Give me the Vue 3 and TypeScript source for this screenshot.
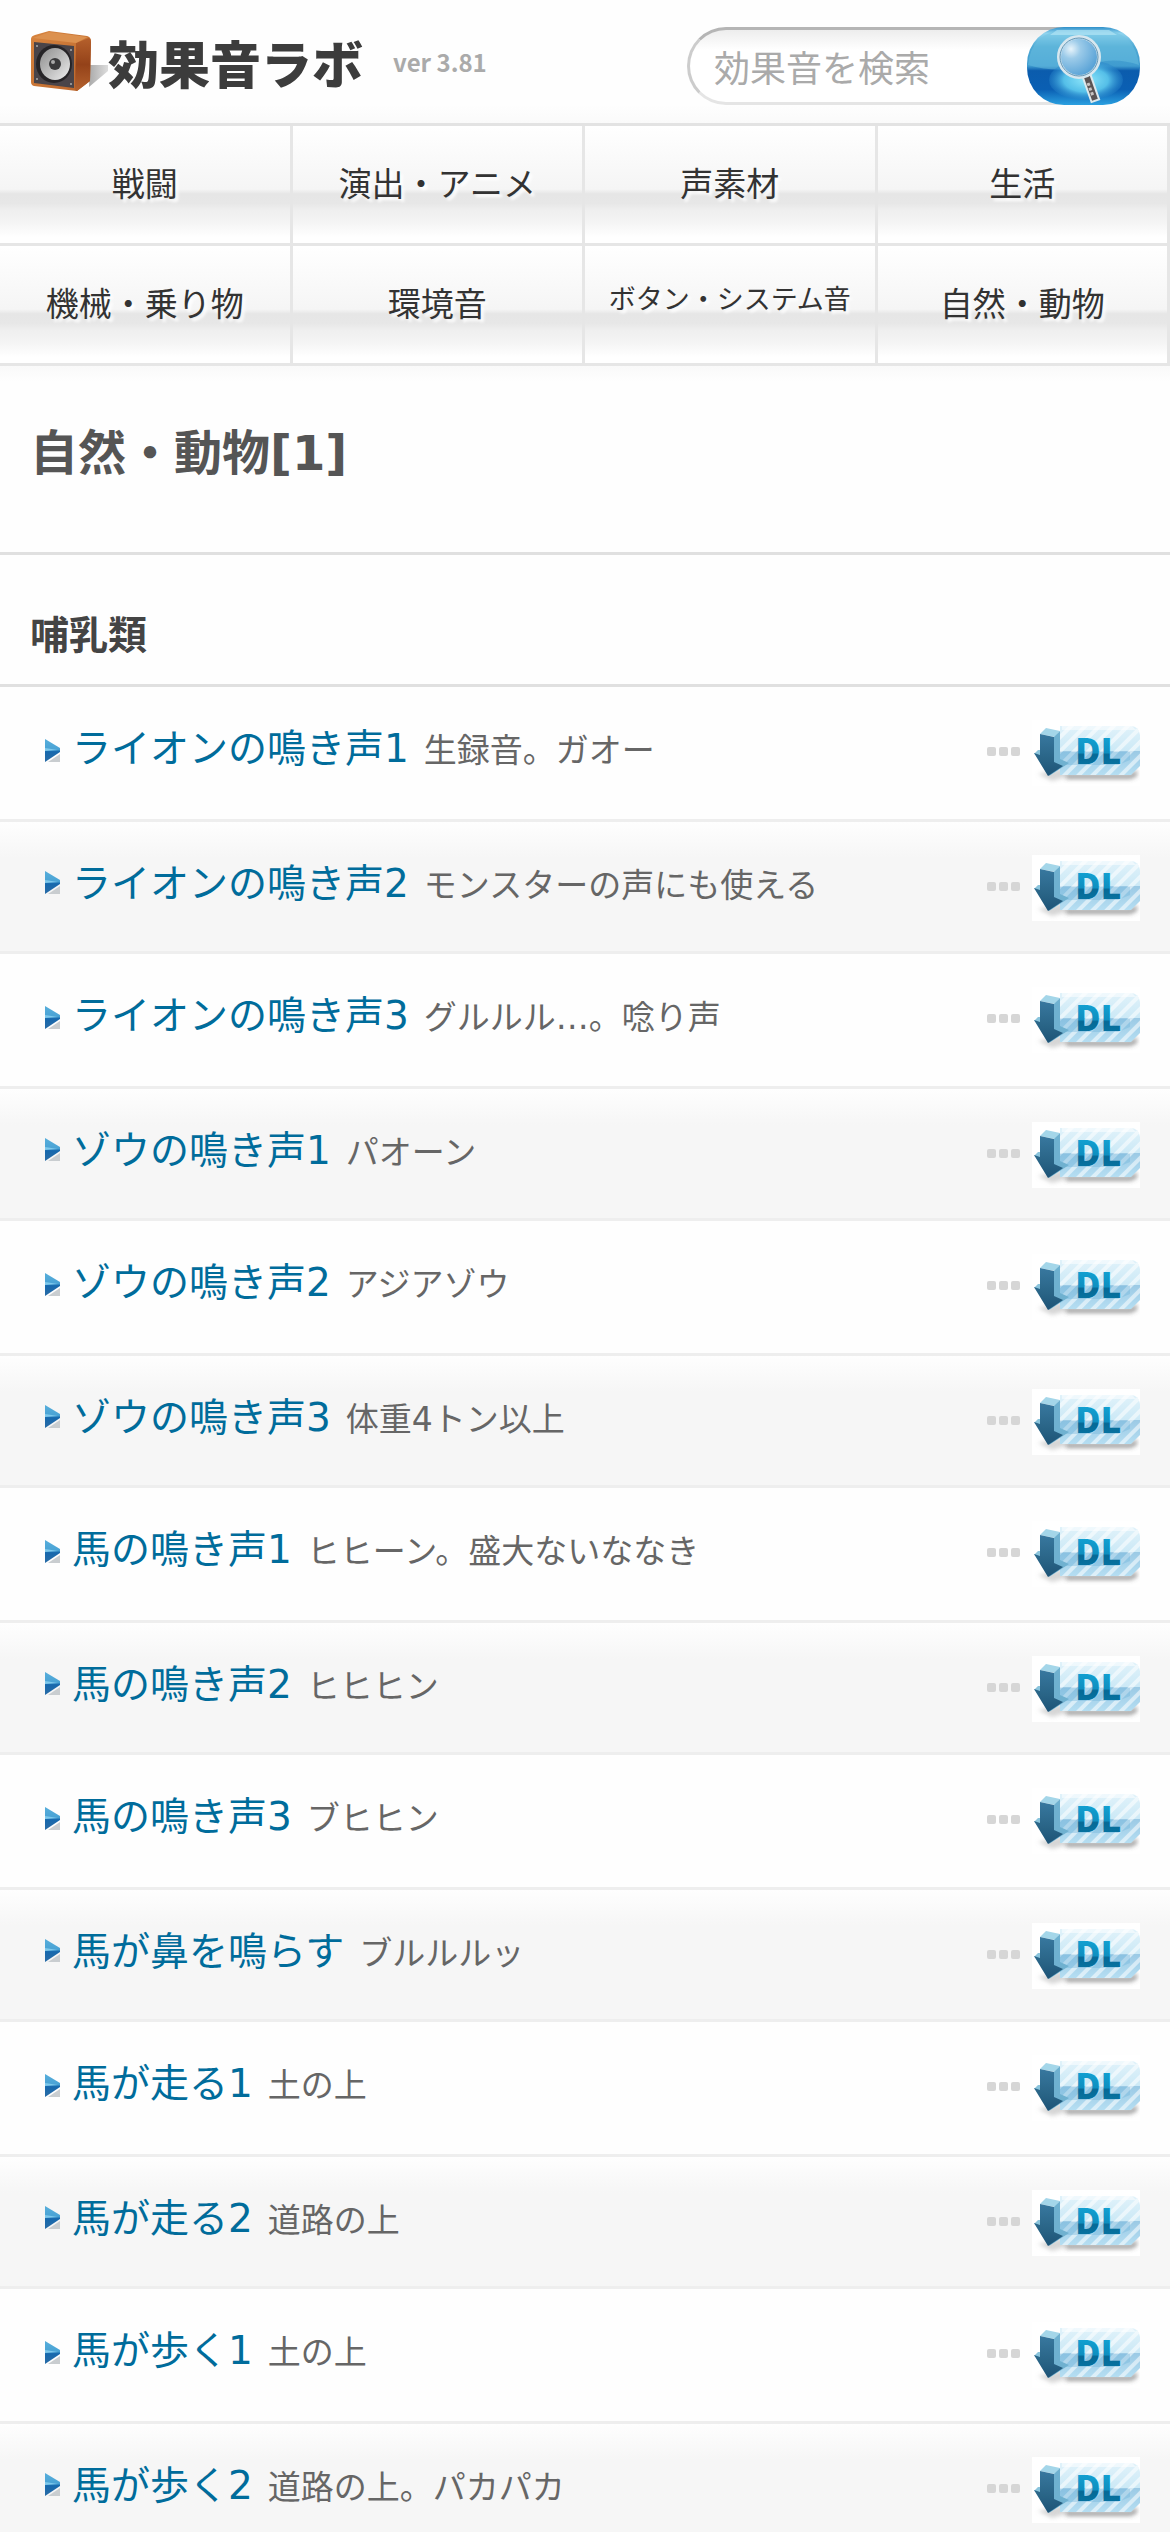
<script setup lang="ts">
import { ref } from 'vue'

interface Category {
  label: string
  long?: boolean
}

interface Sound {
  title: string
  note: string
}

const query = ref('')

const categories: Category[] = [
  { label: '戦闘' },
  { label: '演出・アニメ' },
  { label: '声素材' },
  { label: '生活' },
  { label: '機械・乗り物' },
  { label: '環境音' },
  { label: 'ボタン・システム音', long: true },
  { label: '自然・動物' },
]

const sounds: Sound[] = [
  { title: 'ライオンの鳴き声1', note: '生録音。ガオー' },
  { title: 'ライオンの鳴き声2', note: 'モンスターの声にも使える' },
  { title: 'ライオンの鳴き声3', note: 'グルルル…。唸り声' },
  { title: 'ゾウの鳴き声1', note: 'パオーン' },
  { title: 'ゾウの鳴き声2', note: 'アジアゾウ' },
  { title: 'ゾウの鳴き声3', note: '体重4トン以上' },
  { title: '馬の鳴き声1', note: 'ヒヒーン。盛大ないななき' },
  { title: '馬の鳴き声2', note: 'ヒヒヒン' },
  { title: '馬の鳴き声3', note: 'ブヒヒン' },
  { title: '馬が鼻を鳴らす', note: 'ブルルルッ' },
  { title: '馬が走る1', note: '土の上' },
  { title: '馬が走る2', note: '道路の上' },
  { title: '馬が歩く1', note: '土の上' },
  { title: '馬が歩く2', note: '道路の上。パカパカ' },
]
</script>

<template>
  <div class="page">
    <!-- Shared artwork for the list rows -->
    <svg class="sprites" width="0" height="0" aria-hidden="true">
      <defs>
        <linearGradient id="panel" x1="0" y1="0" x2="0" y2="1">
          <stop offset="0" stop-color="#e0f2fa" />
          <stop offset="0.5" stop-color="#cce9f6" />
          <stop offset="0.52" stop-color="#9ccae5" />
          <stop offset="1" stop-color="#b5def2" />
        </linearGradient>
        <linearGradient id="letters" x1="0" y1="0" x2="0" y2="1">
          <stop offset="0.3" stop-color="#129fd0" />
          <stop offset="0.58" stop-color="#0f8fc0" />
          <stop offset="0.62" stop-color="#066996" />
          <stop offset="1" stop-color="#087caa" />
        </linearGradient>
        <linearGradient id="arrow" x1="0" y1="0" x2="0" y2="1">
          <stop offset="0" stop-color="#38789f" />
          <stop offset="0.6" stop-color="#296486" />
          <stop offset="1" stop-color="#1d5376" />
        </linearGradient>
        <linearGradient id="bullet" x1="0" y1="0" x2="0" y2="1">
          <stop offset="0" stop-color="#57aedb" />
          <stop offset="0.45" stop-color="#4aa3d5" />
          <stop offset="0.55" stop-color="#1668ad" />
          <stop offset="1" stop-color="#2a6ca6" />
        </linearGradient>
        <pattern id="stripes" width="10" height="10" patternUnits="userSpaceOnUse" patternTransform="rotate(45)">
          <rect width="4" height="10" fill="#ffffff" fill-opacity="0.55" />
        </pattern>
        <filter id="soft" x="-20%" y="-40%" width="140%" height="200%">
          <feGaussianBlur stdDeviation="2" />
        </filter>
      </defs>
      <symbol id="download" viewBox="0 0 108 66">
        <rect width="108" height="66" fill="#fff" />
        <path d="M34 54H98L105 50V56L99 59H34Z" fill="#555" fill-opacity="0.55" filter="url(#soft)" />
        <path d="M6 54L20 61L38 56L30 48Z" fill="#999" fill-opacity="0.4" filter="url(#soft)" />
        <path d="M28 6H98Q107 6 108 15V46L99 55H28Z" fill="url(#panel)" />
        <path d="M28 6H98Q107 6 108 15V46L99 55H28Z" fill="url(#stripes)" />
        <path d="M30 6H100L104 10H30Z" fill="#fff" fill-opacity="0.5" />
        <path d="M28 32H98V40L86 45H28Z" fill="#6bb1da" fill-opacity="0.35" />
        <path d="M8 14L14 8L28 11L23 17Z" fill="#a4d6e9" />
        <path d="M22 17L28 11V39L37 43L17 56L22 42Z" fill="#6fb1d0" />
        <path d="M2 34L6 30L8 30V36Z" fill="#8ac4dc" />
        <path d="M8 14L22 17V42L31 46L16 56L2 33L8 35Z" fill="url(#arrow)" />
      </symbol>
      <symbol id="marker" viewBox="0 0 15 24">
        <path d="M3 24L15 16V24Z" fill="#c9cdd0" />
        <path d="M0 1L15 10V14L0 24Z" fill="url(#bullet)" />
        <path d="M0 10L13 12L0 13Z" fill="#7fc9ec" />
      </symbol>
      <symbol id="dots" viewBox="0 0 33 9">
        <rect width="9" height="9" rx="2" fill="#d6d6d6" />
        <rect x="12" width="9" height="9" rx="2" fill="#d6d6d6" />
        <rect x="24" width="9" height="9" rx="2" fill="#d6d6d6" />
      </symbol>
    </svg>

    <header class="header">
      <a class="brand" href="#">
        <svg class="speaker" width="78" height="66" viewBox="0 0 78 66" aria-hidden="true">
          <defs>
            <linearGradient id="wood" x1="0" y1="0" x2="1" y2="1">
              <stop offset="0" stop-color="#d8853f" />
              <stop offset="1" stop-color="#b8642c" />
            </linearGradient>
            <linearGradient id="woodSide" x1="0" y1="0" x2="0" y2="1">
              <stop offset="0" stop-color="#b5602c" />
              <stop offset="0.5" stop-color="#944219" />
              <stop offset="1" stop-color="#b4622e" />
            </linearGradient>
            <linearGradient id="cone" x1="0" y1="0" x2="1" y2="1">
              <stop offset="0" stop-color="#8e8e8e" />
              <stop offset="0.5" stop-color="#bcbcbc" />
              <stop offset="1" stop-color="#eeeeee" />
            </linearGradient>
            <linearGradient id="cast" x1="0" y1="0" x2="1" y2="0">
              <stop offset="0" stop-color="#aaaaaa" />
              <stop offset="1" stop-color="#dddddd" />
            </linearGradient>
          </defs>
          <path d="M59 58L78 42V36L60 36Z" fill="url(#cast)" />
          <path d="M1 10Q1 7 5 6L19 2L57 7Q61 8 61 12L60 52L47 62L4 57Q1 56 1 53Z" fill="url(#wood)" />
          <path d="M46 14L59 9Q61 10 61 13L60 52L47 62Q45 62 45 59Z" fill="url(#woodSide)" />
          <path d="M3 9L19 3L58 8L46 14Z" fill="#dc914f" />
          <path d="M4 13L44 17V59L4 54Z" fill="#494449" />
          <ellipse cx="24" cy="35" rx="18" ry="19" fill="#262427" />
          <ellipse cx="25" cy="35" rx="15" ry="16" fill="url(#cone)" />
          <circle cx="25" cy="35" r="6" fill="#39393b" />
          <circle cx="23" cy="33" r="2" fill="#a9a9a9" />
          <circle cx="7" cy="17" r="1" fill="#aaa" />
          <circle cx="41" cy="21" r="1" fill="#aaa" />
          <circle cx="7" cy="50" r="1" fill="#aaa" />
          <circle cx="41" cy="55" r="1" fill="#aaa" />
        </svg>
        <span class="brand-name">効果音ラボ</span>
      </a>
      <span class="version">ver 3.81</span>

      <form class="search" role="search" @submit.prevent>
        <input v-model="query" class="search-input" type="text" placeholder="効果音を検索" aria-label="効果音を検索" />
        <button class="search-button" type="submit" aria-label="検索">
          <svg width="113" height="78" viewBox="0 0 113 78" aria-hidden="true">
            <defs>
              <linearGradient id="gel" x1="0" y1="0" x2="0" y2="1">
                <stop offset="0" stop-color="#2e8fc9" />
                <stop offset="0.08" stop-color="#8fd3ee" />
                <stop offset="0.25" stop-color="#4fa9d4" />
                <stop offset="0.5" stop-color="#3f9bcf" />
                <stop offset="0.56" stop-color="#0b5cad" />
                <stop offset="0.8" stop-color="#0a5fb3" />
                <stop offset="1" stop-color="#2ba0e0" />
              </linearGradient>
              <radialGradient id="glow">
                <stop offset="0" stop-color="#8ee6fa" />
                <stop offset="0.6" stop-color="#55bfe8" />
                <stop offset="1" stop-color="#2481c8" stop-opacity="0.4" />
              </radialGradient>
              <radialGradient id="lens" cx="0.3" cy="0.3" r="0.8">
                <stop offset="0" stop-color="#e8f4fb" />
                <stop offset="0.3" stop-color="#9ccbe9" />
                <stop offset="1" stop-color="#4c9bd3" />
              </radialGradient>
            </defs>
            <rect width="113" height="78" rx="37" fill="url(#gel)" />
            <path d="M1 38Q4 6 36 3H78Q108 6 112 38Q84 28 56 40Q28 46 1 38Z" fill="#6fc3e2" fill-opacity="0.45" />
            <path d="M30 3H82L90 8H23Z" fill="#b9e8f7" fill-opacity="0.6" />
            <ellipse cx="59" cy="53" rx="37" ry="20" fill="url(#glow)" />
            <path d="M60 50L67 70" stroke="#dce8ec" stroke-width="10" stroke-linecap="square" />
            <path d="M60 50L67 70" stroke="#5a5353" stroke-width="6" stroke-linecap="square" />
            <path d="M61 56L66 69" stroke="#c9c4c2" stroke-width="3" stroke-dasharray="3 2" />
            <circle cx="52" cy="30" r="20" fill="url(#lens)" stroke="#d7e7ef" stroke-width="4" />
            <circle cx="52" cy="30" r="19" fill="none" stroke="#5c93b5" stroke-width="1" />
          </svg>
        </button>
      </form>
    </header>

    <nav class="categories">
      <a v-for="c in categories" :key="c.label" class="category" :class="{ 'category-long': c.long }" href="#">{{ c.label }}</a>
    </nav>

    <main>
      <h1 class="page-title">自然・動物[1]</h1>
      <h2 class="section-title">哺乳類</h2>
      <ul class="sounds">
        <li v-for="s in sounds" :key="s.title" class="sound">
          <svg class="marker" width="15" height="24" aria-hidden="true"><use href="#marker" /></svg>
          <p class="text">
            <a class="title" href="#">{{ s.title }}</a>
            <span class="note">{{ s.note }}</span>
          </p>
          <button class="more" type="button" aria-label="詳細">
            <svg width="33" height="9" aria-hidden="true"><use href="#dots" /></svg>
          </button>
          <a class="download" href="#">
            <svg width="108" height="66">
              <use href="#download" />
              <text x="43" y="44" class="download-label">DL</text>
            </svg>
          </a>
        </li>
      </ul>
    </main>
  </div>
</template>

<style>
body {
  background: #fefefe;
}
</style>

<style scoped>
.page {
  font-family: 'DejaVu Sans', 'Noto Sans CJK JP', sans-serif;
  color: #555;
}

.sprites {
  position: absolute;
}

svg {
  display: block;
}

a {
  text-decoration: none;
}

button {
  padding: 0;
  border: 0;
  background: none;
}

.header {
  display: flex;
  align-items: center;
  box-sizing: border-box;
  height: 123px;
  padding: 0 30px;
  background: linear-gradient(#fefefe 85%, #fafafa);
}

.brand {
  display: flex;
  align-items: center;
  color: #3c3c3c;
}

.brand-name {
  font: 900 51px/60px 'Noto Sans CJK JP', sans-serif;
}

.version {
  margin-left: 30px;
  color: #aaa;
  font: bold 24px/36px 'Noto Sans CJK JP', sans-serif;
}

.search {
  display: flex;
  flex: 0 0 453px;
  min-width: 0;
  margin: 9px 0 0 auto;
  height: 78px;
}

.search-input {
  flex: 1;
  min-width: 0;
  box-sizing: border-box;
  margin-right: -39px;
  padding: 0 39px 0 24px;
  border: 3px solid #ccc;
  border-top-color: #b5b5b5;
  border-right: 0;
  border-bottom-color: #e5e5e5;
  border-radius: 39px 0 0 39px;
  background: linear-gradient(#ededed, #fff 20px);
  color: #555;
  font: 36px/54px 'Noto Sans CJK JP', sans-serif;
  outline: none;
}

.search-input::placeholder {
  color: #aaa;
  opacity: 1;
}

.search-button {
  position: relative;
  flex: none;
}

.categories {
  display: grid;
  grid-template-columns: repeat(4, 1fr);
  border-top: 3px solid #e3e3e3;
}

.category {
  box-sizing: border-box;
  height: 120px;
  border-right: 3px solid #e6e6e6;
  border-bottom: 3px solid #e6e6e6;
  background: linear-gradient(#fff, #f5f5f5 54%, #e6e6e6 58%, #e7e7e7 66%, #efefef 72%, #f4f4f4 82%, #fff 95%);
  color: #333;
  font-size: 33px;
  line-height: 117px;
  text-align: center;
  text-shadow: 3px 3px 3px #fff;
}

.category-long {
  font-size: 27px;
  line-height: 108px;
}

.page-title {
  margin: 0;
  padding: 51px 30px 63px;
  border-bottom: 3px solid #e0e0e0;
  background: linear-gradient(#f9f9f9, #fefefe 15px);
  color: #555;
  font-size: 48px;
  line-height: 72px;
}

.section-title {
  margin: 0;
  padding: 51px 30px 18px;
  border-bottom: 3px solid #e0e0e0;
  color: #444;
  font-size: 39px;
  line-height: 60px;
}

.sounds {
  margin: 0;
  padding: 0;
  list-style: none;
}

.sound {
  display: flex;
  align-items: flex-start;
  padding: 33px 30px 33px 45px;
  border-bottom: 3px solid #eee;
}

.sound:nth-child(even) {
  padding-bottom: 30px;
  background: linear-gradient(#fefefe, #f6f6f6 36px);
}

.marker {
  flex: none;
  margin-top: 18px;
}

.sound:nth-child(even) .marker {
  margin-top: 15px;
}

.text {
  display: flex;
  flex: 1;
  align-items: baseline;
  gap: 15px;
  margin: 0;
  padding-left: 12px;
  line-height: 57px;
}

.title {
  color: #006c9b;
  font-size: 39px;
}

.note {
  color: #666;
  font-size: 33px;
}

.more {
  margin: 27px 12px 0;
}

.download-label {
  fill: url(#letters);
  font: 900 35px 'Noto Sans CJK JP', sans-serif;
}
</style>
